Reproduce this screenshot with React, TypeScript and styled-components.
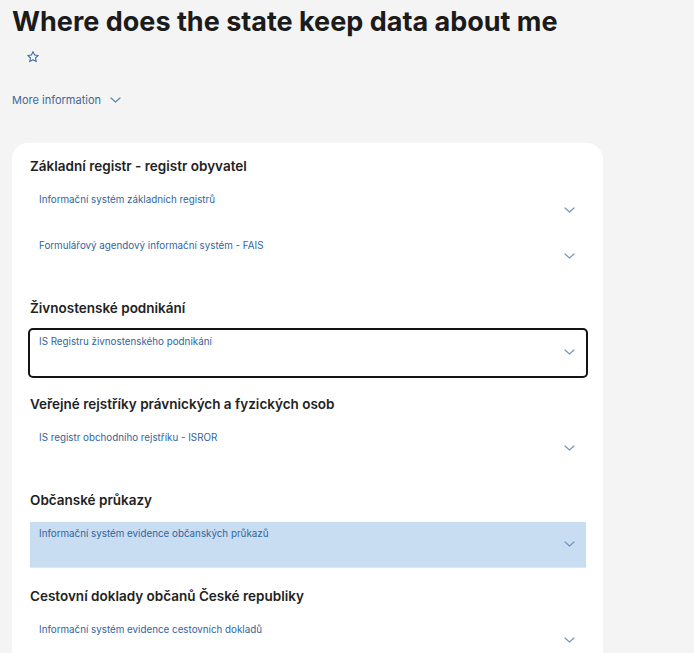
import styled, { createGlobalStyle } from "styled-components";

const GlobalStyle = createGlobalStyle`
    html, body {
        margin: 0;
        padding: 0;
        background: #f4f4f4;
        font-family: Inter, Roboto, "Liberation Sans", Arial, sans-serif;
    }
`;

// Page wrapper
const Page = styled.div`
    padding: 3px 12px 0 12px;
    height: 653px;
    overflow: hidden;
    box-sizing: border-box;
`;

const Title = styled.h1`
    margin: 0;
    font-size: 27px;
    line-height: 38px;
    font-weight: 700;
    color: #1b1b1b;
`;

const StarButton = styled.button`
    display: flex;
    margin: 9px 0 0 14px;
    padding: 0;
    border: none;
    background: none;
    width: 14px;
    height: 14px;
`;

const MoreInfo = styled.button`
    display: flex;
    align-items: center;
    gap: 9px;
    margin-top: 29px;
    padding: 0;
    border: none;
    background: none;
    font-family: inherit;
    font-size: 11px;
    line-height: 14px;
    color: #3e6896;
`;

// White card with the sections
const Card = styled.div`
    margin-top: 36px;
    width: 591px;
    box-sizing: border-box;
    background: #ffffff;
    border-radius: 16px 16px 0 0;
    padding: 14px 17px 0 18px;
    display: flex;
    flex-direction: column;
    gap: 19px;
`;

const Section = styled.section`
    display: flex;
    flex-direction: column;
`;

const SectionTitle = styled.h2`
    margin: 0 0 13px 0;
    font-size: 13.5px;
    line-height: 18px;
    font-weight: 600;
    color: #222222;
`;

const Row = styled.div<{ $variant?: "focus" | "active" }>`
    height: 46px;
    box-sizing: border-box;
    padding: 7px 11px 0 9px;
    display: flex;
    flex-direction: column;
    border-radius: ${(p) => (p.$variant === "focus" ? "3px" : "0")};
    background: ${(p) => (p.$variant === "active" ? "#c8ddf2" : "transparent")};
    box-shadow: ${(p) =>
        p.$variant === "focus"
            ? "0 0 0 2px #141414"
            : p.$variant === "active"
            ? "inset 0 -1px 0 #dbe8f5"
            : "none"};
`;

const RowLabel = styled.span`
    font-size: 9.8px;
    line-height: 10px;
    color: #33649b;
`;

const ChevronWrap = styled.span`
    align-self: flex-end;
    display: flex;
    margin-top: 2px;
`;

const Chevron = ({ color = "#6f97c3", w = 11 }: { color?: string; w?: number }) => (
    <svg width={w} height={6} viewBox="0 0 11 6" fill="none">
        <path d="M1 1l4.5 4L10 1" stroke={color} strokeWidth={1.2} strokeLinecap="round" strokeLinejoin="round" />
    </svg>
);

const Star = () => (
    <svg width={14} height={14} viewBox="0 0 24 24" fill="none">
        <path
            d="M12 2.8l2.7 5.9 6.4.7-4.8 4.3 1.4 6.3L12 16.8l-5.7 3.2 1.4-6.3-4.8-4.3 6.4-.7z"
            stroke="#3b69a3"
            strokeWidth={1.8}
            strokeLinejoin="round"
        />
    </svg>
);

type Item = { label: string; variant?: "focus" | "active" };

const sections: { title: string; items: Item[] }[] = [
    {
        title: "Základní registr - registr obyvatel",
        items: [
            { label: "Informační systém základních registrů" },
            { label: "Formulářový agendový informační systém - FAIS" },
        ],
    },
    {
        title: "Živnostenské podnikání",
        items: [{ label: "IS Registru živnostenského podnikání", variant: "focus" }],
    },
    {
        title: "Veřejné rejstříky právnických a fyzických osob",
        items: [{ label: "IS registr obchodního rejstříku - ISROR" }],
    },
    {
        title: "Občanské průkazy",
        items: [{ label: "Informační systém evidence občanských průkazů", variant: "active" }],
    },
    {
        title: "Cestovní doklady občanů České republiky",
        items: [{ label: "Informační systém evidence cestovních dokladů" }],
    },
];

const App = () => {
    return (
        <Page>
            <GlobalStyle />
            <Title>Where does the state keep data about me</Title>
            <StarButton aria-label="Add to favourites">
                <Star />
            </StarButton>
            <MoreInfo>
                More information
                <Chevron color="#5a84b3" />
            </MoreInfo>
            <Card>
                {sections.map((s) => (
                    <Section key={s.title}>
                        <SectionTitle>{s.title}</SectionTitle>
                        {s.items.map((it) => (
                            <Row key={it.label} $variant={it.variant}>
                                <RowLabel>{it.label}</RowLabel>
                                <ChevronWrap>
                                    <Chevron />
                                </ChevronWrap>
                            </Row>
                        ))}
                    </Section>
                ))}
            </Card>
        </Page>
    );
};

export default App;
